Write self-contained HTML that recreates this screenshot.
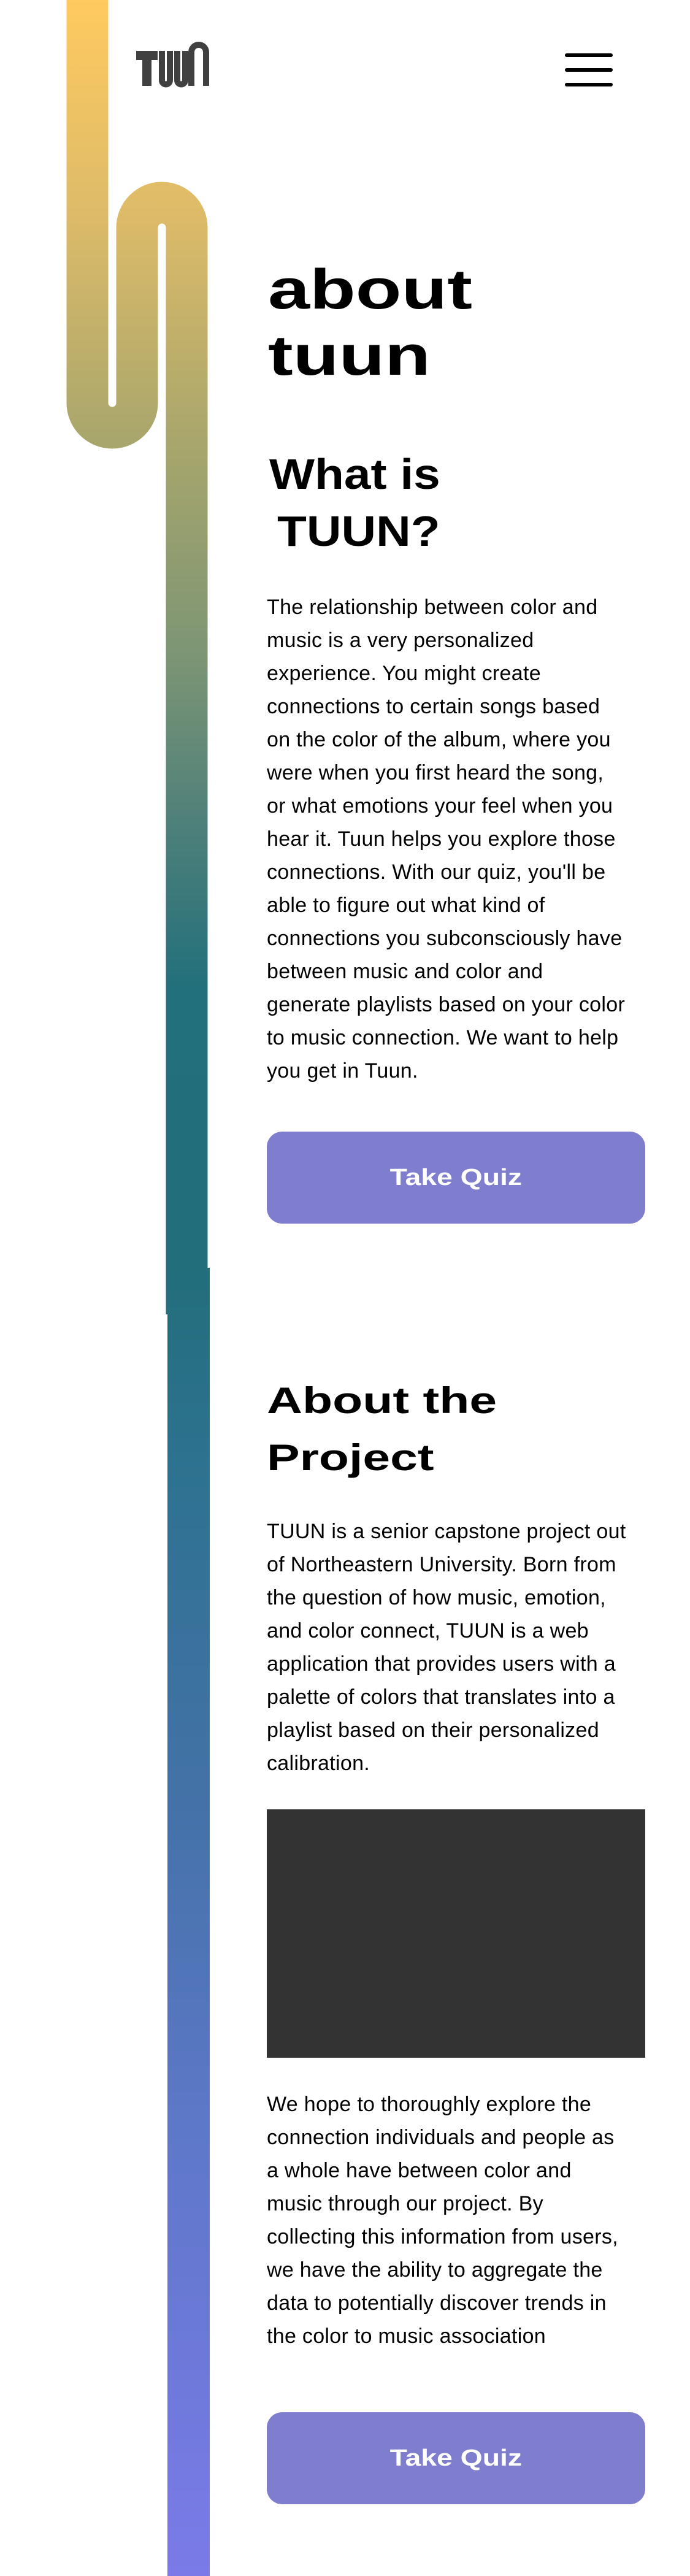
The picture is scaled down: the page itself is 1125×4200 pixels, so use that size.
<!DOCTYPE html>
<html><head><meta charset="utf-8"><style>
*{margin:0;padding:0;box-sizing:border-box}
html,body{width:1125px;height:4200px;background:#fff;overflow:hidden;position:relative;font-family:"Liberation Sans",sans-serif;color:#000}
.abs{position:absolute}
.h{font-weight:bold;white-space:nowrap;transform-origin:0 0;display:inline-block}
.p{position:absolute;left:435px;font-size:34px;white-space:nowrap;letter-spacing:0.3px}
.btn{position:absolute;left:435px;width:617px;height:150px;background:#7F7DCD;border-radius:25px;display:flex;align-items:center;justify-content:center}
.btn span{color:#fff;font-weight:bold;font-size:38px;display:inline-block;transform:scaleX(1.22);white-space:nowrap}
</style></head><body>
<svg class="abs" style="left:0;top:0" width="1125" height="4200" viewBox="0 0 1125 4200">
<defs><linearGradient id="g" gradientUnits="userSpaceOnUse" x1="0" y1="0" x2="0" y2="4200">
<stop offset="0" stop-color="#FFCA5F"/>
<stop offset="0.083" stop-color="#DDBB69"/>
<stop offset="0.172" stop-color="#A8A66C"/>
<stop offset="0.255" stop-color="#7C9574"/>
<stop offset="0.319" stop-color="#4F807A"/>
<stop offset="0.383" stop-color="#22707B"/>
<stop offset="0.491" stop-color="#226E7B"/>
<stop offset="0.574" stop-color="#2E7291"/>
<stop offset="0.701" stop-color="#4472A8"/>
<stop offset="0.829" stop-color="#5E78C9"/>
<stop offset="1" stop-color="#7B7AE8"/>
</linearGradient></defs>
<path d="M142.5 0 V657 A40.5 40.5 0 0 0 223.5 657 V371 A40.5 40.5 0 0 1 304.5 371 V2143" fill="none" stroke="url(#g)" stroke-width="68"/>
<rect x="273" y="2067" width="69" height="2133" fill="url(#g)"/>
<g fill="#404040">
<rect x="222" y="83" width="35" height="15"/>
<rect x="232" y="83" width="15" height="57"/>
</g>
<g fill="none" stroke="#404040" stroke-width="10">
<path d="M264 83 V131 A6.5 6.5 0 0 0 277 131 V83"/>
<path d="M289 83 V131 A6.5 6.5 0 0 0 302 131 V83"/>
<path d="M312 140 V85 A12 12 0 0 1 336 85 V140"/>
</g>
<g stroke="#000" stroke-width="6" stroke-linecap="round">
<line x1="924" y1="90" x2="996" y2="90"/>
<line x1="924" y1="114" x2="996" y2="114"/>
<line x1="924" y1="138" x2="996" y2="138"/>
</g>
<rect x="435" y="2950" width="617" height="405" fill="#333"/>
</svg>

<div class="abs" style="left:437px;top:418px;line-height:108px;font-size:92px"><span class="h" style="transform:scaleX(1.33)">about<br>tuun</span></div>
<div class="abs" style="left:439px;top:727px;line-height:93px;font-size:70px"><span class="h" style="transform:scaleX(1.12)">What is</span></div>
<div class="abs" style="left:452px;top:820px;line-height:93px;font-size:70px"><span class="h" style="transform:scaleX(1.12)">TUUN?</span></div>

<div class="p" style="top:963px;line-height:54px">The relationship between color and<br>music is a very personalized<br>experience. You might create<br>connections to certain songs based<br>on the color of the album, where you<br>were when you first heard the song,<br>or what emotions your feel when you<br>hear it. Tuun helps you explore those<br>connections. With our quiz, you'll be<br>able to figure out what kind of<br>connections you subconsciously have<br>between music and color and<br>generate playlists based on your color<br>to music connection. We want to help<br>you get in Tuun.</div>

<div class="btn" style="top:1845px"><span>Take Quiz</span></div>

<div class="abs" style="left:435px;top:2237px;line-height:93px;font-size:60px"><span class="h" style="transform:scaleX(1.34)">About the<br>Project</span></div>

<div class="p" style="top:2470px;line-height:54px">TUUN is a senior capstone project out<br>of Northeastern University. Born from<br>the question of how music, emotion,<br>and color connect, TUUN is a web<br>application that provides users with a<br>palette of colors that translates into a<br>playlist based on their personalized<br>calibration.</div>

<div class="p" style="top:3404px;line-height:54px">We hope to thoroughly explore the<br>connection individuals and people as<br>a whole have between color and<br>music through our project. By<br>collecting this information from users,<br>we have the ability to aggregate the<br>data to potentially discover trends in<br>the color to music association</div>

<div class="btn" style="top:3933px"><span>Take Quiz</span></div>
</body></html>
